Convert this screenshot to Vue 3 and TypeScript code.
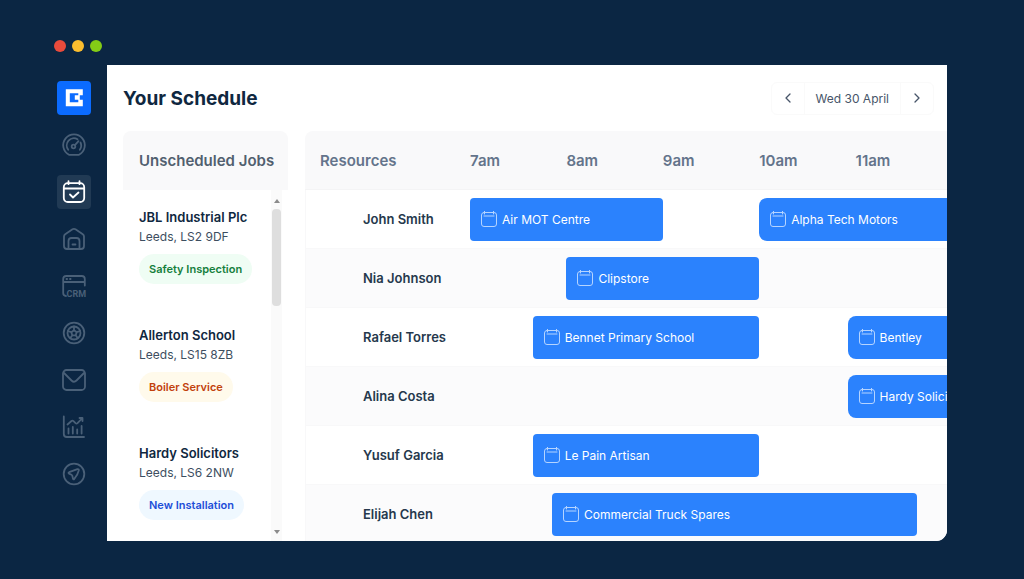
<script setup lang="ts">
interface NavItem {
  label: string
  icon: string
}

interface Job {
  name: string
  place: string
  tag: string
  tone: 'green' | 'amber' | 'blue'
}

interface Booking {
  title: string
  /** minutes after the first hour on the board */
  start: number
  end: number
}

interface Resource {
  name: string
  bookings: Booking[]
}

const nav: NavItem[] = [
  { label: 'Dashboard', icon: 'gauge' },
  { label: 'Schedule', icon: 'calendar' },
  { label: 'Sites', icon: 'home' },
  { label: 'CRM', icon: 'crm' },
  { label: 'Vehicles', icon: 'wheel' },
  { label: 'Messages', icon: 'mail' },
  { label: 'Reports', icon: 'chart' },
  { label: 'Tracking', icon: 'compass' },
]
const activeNav = 'calendar'

const jobs: Job[] = [
  { name: 'JBL Industrial Plc', place: 'Leeds, LS2 9DF', tag: 'Safety Inspection', tone: 'green' },
  { name: 'Allerton School', place: 'Leeds, LS15 8ZB', tag: 'Boiler Service', tone: 'amber' },
  { name: 'Hardy Solicitors', place: 'Leeds, LS6 2NW', tag: 'New Installation', tone: 'blue' },
]

const hours: string[] = ['7am', '8am', '9am', '10am', '11am']

const resources: Resource[] = [
  {
    name: 'John Smith',
    bookings: [
      { title: 'Air MOT Centre', start: 0, end: 120 },
      { title: 'Alpha Tech Motors', start: 180, end: 300 },
    ],
  },
  { name: 'Nia Johnson', bookings: [{ title: 'Clipstore', start: 60, end: 180 }] },
  {
    name: 'Rafael Torres',
    bookings: [
      { title: 'Bennet Primary School', start: 39, end: 180 },
      { title: 'Bentley', start: 235, end: 300 },
    ],
  },
  { name: 'Alina Costa', bookings: [{ title: 'Hardy Solicitors', start: 235, end: 300 }] },
  { name: 'Yusuf Garcia', bookings: [{ title: 'Le Pain Artisan', start: 39, end: 180 }] },
  { name: 'Elijah Chen', bookings: [{ title: 'Commercial Truck Spares', start: 51, end: 278 }] },
]

const span = (b: Booking) => ({ gridColumn: `${b.start + 1} / ${b.end + 1}` })
</script>

<template>
  <div class="desktop">
    <div class="lights" aria-hidden="true">
      <span class="light red"></span>
      <span class="light yellow"></span>
      <span class="light green"></span>
    </div>

    <div class="window">
      <nav class="sidebar" aria-label="Main">
        <a class="logo" href="#" aria-label="Home">
          <svg width="34" height="34" viewBox="0 0 34 34">
            <path fill="#fff" fill-rule="evenodd" d="M8.800 8.300h17v6h-3v4.400h3v6.600h-17zM12.800 12.300v9h8.500v-2.600h-3.500v-4.400h3.500v-2z" />
          </svg>
        </a>
        <a
          v-for="item in nav"
          :key="item.label"
          href="#"
          class="nav-item"
          :class="{ active: item.icon === activeNav }"
          :aria-label="item.label"
        >
          <svg class="nav-icon" viewBox="0 0 24 24">
            <g v-if="item.icon === 'gauge'">
              <path d="M7 21.800a10.800 10.800 0 1 1 10 0z" />
              <path d="M6.200 16.800a7.200 7.200 0 0 1 9.300-10.600M18.500 9.500a7.200 7.200 0 0 1-.7 7.300" />
              <circle cx="11.500" cy="13.500" r="1.800" />
              <path d="M12.900 12.100l3.600-4" />
            </g>
            <g v-else-if="item.icon === 'calendar'">
              <rect x="1.800" y="3.200" width="20.400" height="18.800" rx="4" />
              <path d="M2 8.500h20M6.500 1.200v3M17.500 1.200v3M8 14.500l3 3 5.500-5" />
            </g>
            <g v-else-if="item.icon === 'home'">
              <path d="M2 9.500 C2 8.500 2.500 7.800 3.200 7.300L10.500 2.300q1.500-1 3 0l7.300 5c.7.500 1.200 1.200 1.200 2.200V19q0 3-3 3H5q-3 0-3-3z" />
              <path d="M6.500 22v-8q0-3 3-3h5q3 0 3 3v8M10.500 17.500h3" />
            </g>
            <g v-else-if="item.icon === 'crm'">
              <path d="M4 22q-2.800 0-2.800-3V5q0-3 3-3h15.600q3 0 3 3v6.500M1.200 8h21.600M4.500 5h.6M8 5h.6" />
              <text x="4.500" y="22.500" class="crm-text">CRM</text>
            </g>
            <g v-else-if="item.icon === 'wheel'">
              <circle cx="12" cy="12" r="10.300" />
              <circle cx="12" cy="12" r="6.500" />
              <path d="M12 9.200l2.700 2-1 3.100h-3.400l-1-3.100zM12 9.200V5.500M14.700 11.200l3.500-1.200M13.700 14.300l2.100 3M10.300 14.300l-2.100 3M9.300 11.200L5.800 10" />
            </g>
            <g v-else-if="item.icon === 'mail'">
              <rect x="1" y="2" width="22" height="20" rx="3.500" />
              <path d="M2 5l7.500 7.500q2.500 2.400 5 0L22 5" />
            </g>
            <g v-else-if="item.icon === 'chart'">
              <path d="M1.800 1.500V19q0 3 3 3H22M6.500 18.500v-5M10.800 18.500V12M15.200 18.500v-4M19.600 18.500V11" />
              <path d="M5.500 9.500L9.500 6q1-.8 2 .2l2 2q1 .9 2 0l5-5.200M17.500 3h3v3" />
            </g>
            <g v-else>
              <circle cx="12" cy="12" r="10.300" />
              <path d="M16.600 7.400q-.4-.5-1.200-.2l-8.200 3q-1.300.6-.2 1.400l2.500 1.200q.6.300.8 1l.7 2.900q.5 1.300 1.300.2q3.500-4 4.500-8.500.1-.6-.2-1z" />
            </g>
          </svg>
        </a>
      </nav>

      <main class="content">
        <header class="topbar">
          <h1>Your Schedule</h1>
          <div class="date-nav">
            <button type="button" class="step" aria-label="Previous day">
              <svg width="12" height="12" viewBox="0 0 12 12"><path d="M8 2L4 6l4 4" /></svg>
            </button>
            <span class="date">Wed 30 April</span>
            <button type="button" class="step" aria-label="Next day">
              <svg width="12" height="12" viewBox="0 0 12 12"><path d="M4 2l4 4-4 4" /></svg>
            </button>
          </div>
        </header>

        <div class="panels">
          <section class="unscheduled">
            <h2>Unscheduled Jobs</h2>
            <div class="job-scroll">
              <ul class="jobs">
                <li v-for="job in jobs" :key="job.name" class="job">
                  <strong>{{ job.name }}</strong>
                  <span class="place">{{ job.place }}</span>
                  <span class="tag" :class="job.tone">{{ job.tag }}</span>
                </li>
              </ul>
              <div class="scrollbar" aria-hidden="true">
                <svg width="6" height="4" viewBox="0 0 6 4"><path d="M0 4l3-4 3 4z" /></svg>
                <div class="thumb"></div>
                <svg width="6" height="4" viewBox="0 0 6 4"><path d="M0 0l3 4 3-4z" /></svg>
              </div>
            </div>
          </section>

          <section class="board">
            <table>
              <thead>
                <tr>
                  <th scope="col" class="name-col">Resources</th>
                  <th v-for="hour in hours" :key="hour" scope="col">{{ hour }}</th>
                </tr>
              </thead>
              <tbody>
                <tr v-for="resource in resources" :key="resource.name">
                  <th scope="row">{{ resource.name }}</th>
                  <td :colspan="hours.length">
                    <div class="track">
                      <button
                        v-for="booking in resource.bookings"
                        :key="booking.title"
                        type="button"
                        class="booking"
                        :class="{ continues: booking.end === 300 }"
                        :style="span(booking)"
                      >
                        <svg width="16" height="16" viewBox="0 0 16 16">
                          <rect x="0.500" y="1.500" width="15" height="14" rx="2.500" />
                          <path d="M3.500 0v3M12.500 0v3M3 5h10" />
                        </svg>
                        <span>{{ booking.title }}</span>
                      </button>
                    </div>
                  </td>
                </tr>
              </tbody>
            </table>
          </section>
        </div>
      </main>
    </div>
  </div>
</template>

<style>
body {
  margin: 0;
  background: #0b2643;
}
</style>

<style scoped>
.desktop {
  box-sizing: border-box;
  display: flex;
  flex-direction: column;
  height: 100vh;
  padding: 40px 77px 38px 41px;
  background: #0b2643;
  color: #0f2740;
  font-family: Inter, "Liberation Sans", sans-serif;
  font-size: 13px;
}

.lights {
  display: flex;
  gap: 6px;
  padding: 0 0 13px 13px;
}

.light {
  width: 12px;
  height: 12px;
  border-radius: 50%;
}

.light.red { background: #e94b3c; }
.light.yellow { background: #fbbd2e; }
.light.green { background: #84cc16; }

.window {
  display: flex;
  flex: 1;
  min-height: 0;
}

.sidebar {
  display: flex;
  flex-direction: column;
  align-items: center;
  gap: 13px;
  width: 66px;
  padding-top: 16px;
}

.logo,
.nav-item {
  display: flex;
  flex: none;
  align-items: center;
  justify-content: center;
  width: 34px;
  height: 34px;
  border-radius: 4px;
  color: #4a6078;
}

.logo { background: #0b6bff; }

.nav-item.active {
  background: #213a54;
  color: #fff;
}

.nav-icon {
  width: 24px;
  height: 24px;
  overflow: visible;
  fill: none;
  stroke: currentColor;
  stroke-width: 1.8;
  stroke-linecap: round;
  stroke-linejoin: round;
}

.crm-text {
  fill: currentColor;
  stroke: none;
  font-family: Roboto, sans-serif;
  font-size: 9px;
  font-weight: 700;
}

.content {
  flex: 1;
  min-width: 0;
  overflow: hidden;
  background: #fff;
  border-radius: 0 0 11px 0;
}

.topbar {
  display: flex;
  align-items: center;
  justify-content: space-between;
  height: 66px;
  padding: 0 13px 0 16px;
}

h1 {
  margin: 0;
  font-size: 19px;
  font-weight: 700;
}

.date-nav {
  display: flex;
  height: 31px;
  border: 1px solid #fafafa;
  border-radius: 6px;
}

.step {
  display: flex;
  align-items: center;
  justify-content: center;
  width: 32px;
  padding: 0;
  border: 0;
  background: none;
}

.step path {
  fill: none;
  stroke: #475569;
  stroke-width: 1.3;
  stroke-linecap: round;
  stroke-linejoin: round;
}

.date {
  padding: 0 11px;
  border: solid #fafafa;
  border-width: 0 1px;
  color: #475569;
  font-size: 12px;
  line-height: 31px;
}

.panels {
  display: flex;
  align-items: flex-start;
  gap: 17px;
  padding-left: 16px;
}

.unscheduled {
  flex: none;
  width: 165px;
}

h2 {
  margin: 0;
  padding-left: 16px;
  border-radius: 8px 8px 0 0;
  background: #f9f9fa;
  color: #51606f;
  font-size: 15px;
  font-weight: 600;
  line-height: 59px;
  white-space: nowrap;
}

.job-scroll {
  display: flex;
  justify-content: space-between;
  padding-right: 6px;
}

.jobs {
  margin: 0;
  padding: 0;
  list-style: none;
}

.job {
  box-sizing: border-box;
  display: flex;
  flex-direction: column;
  align-items: flex-start;
  height: 118px;
  padding: 18px 0 0 16px;
  line-height: 19px;
  white-space: nowrap;
}

.job strong { font-weight: 600; }

.place {
  color: #3d4e60;
  font-size: 12px;
}

.tag {
  margin-top: 8px;
  padding: 0 10px;
  border-radius: 15px;
  font-size: 11px;
  font-weight: 600;
  line-height: 30px;
}

.tag.green { background: #effdf4; color: #15803d; }
.tag.amber { background: #fffaeb; color: #c2410c; }
.tag.blue { background: #eff8ff; color: #1d4ed8; }

.scrollbar {
  display: flex;
  flex-direction: column;
  align-items: center;
  box-sizing: border-box;
  width: 11px;
  height: 352px;
  padding: 9px 0 8px;
  background: #fafafa;
}

.scrollbar svg { fill: #8b8b8b; }

.thumb {
  width: 9px;
  height: 97px;
  margin: 6px 0 auto;
  border-radius: 4px;
  background: #dedede;
}

.board {
  flex: 1;
  min-width: 0;
}

table {
  width: calc(100% + 5px);
  border-spacing: 0;
  table-layout: fixed;
}

th,
td {
  padding: 0;
  text-align: left;
}

thead th {
  height: 58px;
  border-bottom: 1px solid #f4f4f5;
  background: #f9f9fa;
  color: #64748b;
  font-size: 15px;
  font-weight: 600;
}

thead .name-col {
  width: 150px;
  padding-left: 15px;
  border-radius: 8px 0 0 0;
}

tbody th,
tbody td {
  height: 58px;
  border-bottom: 1px solid #f8f8f9;
}

tbody th {
  padding-left: 57px;
  border-left: 1px solid #f8f8f9;
  color: #25384c;
  font-weight: 600;
}

tbody tr:nth-child(even) { background: #fbfbfc; }

.track {
  display: grid;
  grid-template-columns: repeat(300, minmax(0, 1fr));
}

.booking {
  display: flex;
  align-items: center;
  gap: 5px;
  height: 43px;
  padding: 0 0 0 11px;
  border: 0;
  border-radius: 4px;
  background: #2b82fd;
  color: #fff;
  font: inherit;
  font-size: 12px;
  white-space: nowrap;
}

.booking.continues { border-radius: 8px 0 0 8px; }

.booking svg {
  flex: none;
  fill: none;
  stroke: #b5d4ff;
  stroke-width: 1;
  stroke-linecap: round;
}
</style>
